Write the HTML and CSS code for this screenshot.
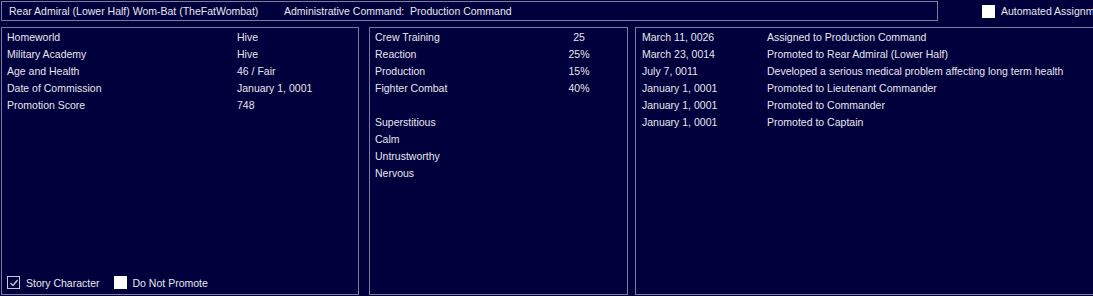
FILE: index.html
```html
<!DOCTYPE html>
<html lang="en">
<head>
    <meta charset="UTF-8">
    <title>Commander Details</title>
    <link rel="stylesheet" href="styles.css">
</head>
<body>
    <div class="top">
        <div class="title-box">
            <span class="name">Rear Admiral (Lower Half) Wom-Bat (TheFatWombat)</span>
            <span class="command">Administrative Command:&nbsp; Production Command</span>
        </div>
        <label class="check auto">
            <span class="box"></span>
            <span>Automated Assignment</span>
        </label>
    </div>

    <div class="panels">
        <!-- Left: biography -->
        <div class="panel bio">
            <div class="row"><span class="label">Homeworld</span><span>Hive</span></div>
            <div class="row"><span class="label">Military Academy</span><span>Hive</span></div>
            <div class="row"><span class="label">Age and Health</span><span>46 / Fair</span></div>
            <div class="row"><span class="label">Date of Commission</span><span>January 1, 0001</span></div>
            <div class="row"><span class="label">Promotion Score</span><span>748</span></div>

            <div class="checks">
                <label class="check">
                    <span class="box checked">
                        <svg width="10" height="10" viewBox="0 0 10 10"><path d="M1.5 5 L4 7.5 L8.5 2" fill="none" stroke="#c8c8d0" stroke-width="1.3"/></svg>
                    </span>
                    <span>Story Character</span>
                </label>
                <label class="check">
                    <span class="box"></span>
                    <span>Do Not Promote</span>
                </label>
            </div>
        </div>

        <!-- Middle: bonuses and traits -->
        <div class="panel skills">
            <div class="row"><span class="label">Crew Training</span><span class="val">25</span></div>
            <div class="row"><span class="label">Reaction</span><span class="val">25%</span></div>
            <div class="row"><span class="label">Production</span><span class="val">15%</span></div>
            <div class="row"><span class="label">Fighter Combat</span><span class="val">40%</span></div>
            <div class="row"></div>
            <div class="row">Superstitious</div>
            <div class="row">Calm</div>
            <div class="row">Untrustworthy</div>
            <div class="row">Nervous</div>
        </div>

        <!-- Right: history -->
        <div class="panel history">
            <div class="row"><span class="date">March 11, 0026</span><span>Assigned to Production Command</span></div>
            <div class="row"><span class="date">March 23, 0014</span><span>Promoted to Rear Admiral (Lower Half)</span></div>
            <div class="row"><span class="date">July 7, 0011</span><span>Developed a serious medical problem affecting long term health</span></div>
            <div class="row"><span class="date">January 1, 0001</span><span>Promoted to Lieutenant Commander</span></div>
            <div class="row"><span class="date">January 1, 0001</span><span>Promoted to Commander</span></div>
            <div class="row"><span class="date">January 1, 0001</span><span>Promoted to Captain</span></div>
        </div>
    </div>
</body>
</html>
```

FILE: styles.css
```css
body {
    margin: 0;
    width: 1093px;
    height: 296px;
    overflow: hidden;
    background-color: #00003c;
    color: #e6e6ec;
    font-family: "Liberation Sans", Arial, sans-serif;
    font-size: 10.5px;
}
.top {
    display: flex;
    align-items: center;
    padding: 1px 0 0 1px;
    height: 20px;
}
.title-box {
    display: flex;
    align-items: center;
    flex-shrink: 0;
    box-sizing: border-box;
    width: 937px;
    height: 20px;
    border: 1px solid #7c7c9c;
    padding-left: 7px;
    white-space: nowrap;
}
.title-box .name {
    width: 275px;
}
.check {
    display: flex;
    align-items: center;
    flex-shrink: 0;
    white-space: nowrap;
}
.check .box {
    display: inline-flex;
    align-items: center;
    justify-content: center;
    box-sizing: border-box;
    width: 13px;
    height: 13px;
    margin-right: 6px;
    background-color: #ffffff;
}
.check .box.checked {
    background-color: #00003c;
    border: 1px solid #c8c8d0;
}
.auto {
    margin-left: 44px;
}
.panels {
    display: flex;
    margin-top: 6px;
    padding-left: 1px;
}
.panel {
    display: flex;
    flex-direction: column;
    box-sizing: border-box;
    height: 268px;
    border: 1px solid #7c7c9c;
    padding: 1px 0 0 5px;
    flex-shrink: 0;
}
.row {
    display: flex;
    height: 17px;
    line-height: 17px;
    white-space: nowrap;
}
.bio {
    width: 358px;
}
.bio .label {
    width: 230px;
}
.checks {
    display: flex;
    margin-top: auto;
    padding-bottom: 3px;
    height: 17px;
    align-items: center;
}
.checks .check {
    margin-right: 14px;
}
.skills {
    width: 259px;
    margin-left: 10px;
}
.skills .label {
    width: 180px;
}
.skills .val {
    width: 48px;
    text-align: center;
}
.history {
    width: 470px;
    margin-left: 7px;
    padding-left: 6px;
}
.history .date {
    width: 125px;
}
```
